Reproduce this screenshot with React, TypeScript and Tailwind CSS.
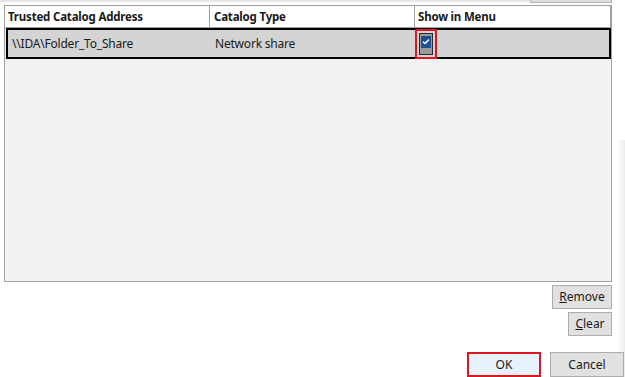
export default function App() {
  return (
    <div className="relative h-[377px] w-[625px] overflow-hidden bg-white text-[11.5px] text-[#1a1a1a] [font-family:'Noto_Sans',sans-serif]">
      {/* faint window shadow on the right */}
      <div className="absolute top-[140px] right-0 h-[237px] w-[8px] bg-gradient-to-r from-white to-[#ececec]" />

      {/* top strip with the edge of a button above */}
      <div className="flex h-[5px]">
        <div className="h-[2px] w-[530px] bg-[#e6e6e6]" />
        <div className="h-[3px] w-[82px] border-x border-b border-[#b4b4b4] bg-[#dcdcdc]" />
      </div>

      {/* catalog grid */}
      <div className="relative ml-[4px] flex h-[277px] w-[608px] flex-col border border-[#a0a0a0] bg-[#f2f2f2]">
        <div className="flex h-[22px] bg-white font-bold tracking-[-0.2px]">
          <div className="flex w-[205px] items-center border-r border-b border-[#a0a0a0] pl-[3px]">Trusted Catalog Address</div>
          <div className="flex w-[205px] items-center border-r border-b border-[#a0a0a0] pl-[4px]">Catalog Type</div>
          <div className="flex flex-1 items-center border-r border-b border-[#a0a0a0] pl-[3px]">Show in Menu</div>
        </div>
        <div className="ml-[1px] flex h-[31px] border-2 border-black bg-[#d4d4d4] text-[12px] tracking-[-0.2px]">
          <div className="flex w-[202px] items-center pl-[4px]">\\IDA\Folder_To_Share</div>
          <div className="flex w-[205px] items-center pl-[5px]">Network share</div>
          <div className="flex flex-1 items-center">
            <div className="flex h-[30px] w-[22px] items-start justify-center border-2 border-[#e0141e] pt-[2px]">
              <div className="flex h-[22px] w-[14px] flex-col items-center border border-[#2b2b2b] bg-[#9a9a9a] pt-[2px]">
                <div className="flex h-[12px] w-[10px] items-center justify-center bg-[#1f4f8f]">
                  <svg width="8" height="7" viewBox="0 0 8 7">
                    <path d="M1 3.8 L3 5.6 L7 1.4" fill="none" stroke="white" strokeWidth="1.4" />
                  </svg>
                </div>
              </div>
            </div>
          </div>
        </div>
      </div>

      {/* side buttons */}
      <div className="relative mt-[3px] flex w-[612px] flex-col items-end gap-[3px] text-[12px]">
        <button className="h-[24px] w-[60px] border border-[#adadad] bg-[#e1e1e1]">
          <span className="underline">R</span>emove
        </button>
        <button className="h-[24px] w-[44px] border border-[#adadad] bg-[#e1e1e1]">
          <span className="underline">C</span>lear
        </button>
      </div>

      {/* dialog buttons */}
      <div className="relative mt-[16px] flex justify-end gap-[9px] pr-[1px] text-[12px]">
        <button className="h-[25px] w-[74px] border-2 border-[#e0141e] bg-[#e5f1fb]">OK</button>
        <button className="h-[25px] w-[74px] border border-[#adadad] bg-[#e1e1e1]">Cancel</button>
      </div>
    </div>
  );
}
